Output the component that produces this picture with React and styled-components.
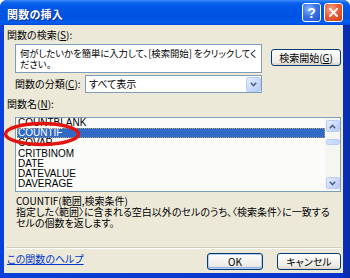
import React from 'react';
import styled, { createGlobalStyle } from 'styled-components';

const jp = `"Noto Sans CJK JP", "Noto Sans", sans-serif`;

const Global = createGlobalStyle`
  html, body { margin: 0; padding: 0; background: #ffffff; overflow: hidden; }
  body { font-family: ${jp}; }
`;

const Window = styled.div`
  position: relative;
  width: 350px;
  height: 278px;
  display: flex;
  flex-direction: column;
  border-radius: 7px 7px 0 0;
  overflow: hidden;
  background: linear-gradient(to right, #0A3FDB 0%, #0840D8 2%, #0833C8 97%, #0A2AA8 100%);
  font-family: ${jp};
  font-size: 10px;
  font-feature-settings: "palt";
  color: #000;
`;

const TitleBar = styled.div`
  height: 25px;
  flex: none;
  display: flex;
  align-items: flex-start;
  padding: 3px 7px 0 7px;
  box-sizing: border-box;
  background: linear-gradient(to bottom, #3C8CF8 0%, #0A62EC 12%, #0056E6 30%, #0053E2 70%, #005CEC 90%, #0047D6 100%);
`;

const Title = styled.div`
  flex: 1;
  margin-top: 5px;
  line-height: 12px;
  color: #ffffff;
  font-weight: bold;
  font-size: 11px;
  letter-spacing: 0.2px;
  text-shadow: 1px 1px 0 #0A2A8C;
`;

const CapButton = styled.div`
  width: 19px;
  height: 19px;
  box-sizing: border-box;
  border: 1px solid #ffffff;
  border-radius: 3px;
  margin-left: ${p => (p.$close ? '3px' : '0')};
  display: flex;
  align-items: center;
  justify-content: center;
  color: #fff;
  font-family: "Liberation Sans", sans-serif;
  font-weight: bold;
  font-size: 14px;
  line-height: 1;
  background: ${p =>
    p.$close
      ? 'radial-gradient(circle at 35% 30%, #F6A58A 0%, #E8603A 45%, #CC3A18 100%)'
      : 'radial-gradient(circle at 35% 30%, #8FB6FA 0%, #3A74EC 45%, #1B4FD2 100%)'};
`;

const Body = styled.div`
  flex: 1;
  min-height: 0;
  display: flex;
  flex-direction: column;
  background: #ECE9D8;
  margin: 0 7px 5px 4px;
  padding: 4px 2px 3px 3px;
`;

const Label = styled.div`
  line-height: 12px;
  height: 12px;
  white-space: nowrap;
  margin-top: ${p => p.$mt || 0}px;
  padding-left: ${p => p.$indent || 0}px;
  width: ${p => (p.$w ? `${p.$w}px` : 'auto')};
  flex: none;
  box-sizing: border-box;
`;

const SearchRow = styled.div`
  display: flex;
  align-items: flex-start;
  margin-top: 3px;
  padding-left: 8px;
  gap: 9px;
`;

const SearchBox = styled.div`
  width: 247px;
  height: 29px;
  box-sizing: border-box;
  border: 1px solid #7F9DB9;
  background: #ffffff;
  padding: 3px 0 0 4px;
  font-size: 9.4px;
  letter-spacing: -0.05px;
  line-height: 11px;
  overflow: hidden;
`;

const Line = styled.div`
  white-space: nowrap;
`;

const XPButton = styled.div`
  box-sizing: border-box;
  width: ${p => p.$w}px;
  height: 17px;
  margin-top: ${p => p.$mt || 0}px;
  border: 1px solid #003C74;
  border-radius: 3px;
  background: linear-gradient(to bottom, #FFFFFF 0%, #F6F6F2 35%, #ECEBE6 80%, #D8D2C6 100%);
  box-shadow: ${p =>
    p.$default ? 'inset 0 0 0 1px #B5CDF3, inset 0 -1px 0 1px #92B2EA' : 'none'};
  display: flex;
  align-items: center;
  justify-content: center;
  line-height: 15px;
  white-space: nowrap;
`;

const CategoryRow = styled.div`
  display: flex;
  align-items: center;
  margin-top: 2px;
  padding-left: 8px;
`;

const Select = styled.div`
  width: 177px;
  height: 18px;
  box-sizing: border-box;
  border: 1px solid #7F9DB9;
  background: #ffffff;
  display: flex;
  align-items: center;
  padding: 0 0 0 3px;
`;

const SelectText = styled.span`
  flex: 1;
  line-height: 16px;
`;

const ArrowBox = styled.div`
  width: ${p => p.$w || 14}px;
  height: ${p => p.$h || 14}px;
  box-sizing: border-box;
  border: 1px solid #B9CCF6;
  border-radius: 2px;
  background: linear-gradient(135deg, #E6EEFE 0%, #CCDBFC 50%, #B7CBF7 100%);
  display: flex;
  align-items: center;
  justify-content: center;
  flex: none;
`;

const ListBox = styled.div`
  position: relative;
  margin: 7px 0 0 8px;
  height: 75px;
  box-sizing: border-box;
  border: 1px solid #7F9DB9;
  background: #FBFCF9;
  display: flex;
  overflow: hidden;
`;

const Items = styled.div`
  flex: 1;
  overflow: hidden;
  padding-left: 1px;
`;

const Item = styled.div`
  height: 10.2px;
  line-height: 10.2px;
  padding-left: 1px;
  font-family: "Liberation Sans", Arial, sans-serif;
  font-size: 10px;
  white-space: nowrap;
  box-sizing: border-box;
  color: ${p => (p.$selected ? '#ffffff' : '#000000')};
  background: ${p => (p.$selected ? '#316AC5' : 'transparent')};
  outline: ${p => (p.$selected ? '1px dotted #A89C70' : 'none')};
  outline-offset: -1px;
`;

const ScrollBar = styled.div`
  width: 15px;
  flex: none;
  display: flex;
  flex-direction: column;
  align-items: center;
  background: #F6F6F1;
  padding: 2px 0;
  box-sizing: border-box;
`;

const Thumb = styled.div`
  margin-top: 7px;
  width: 14px;
  height: 6px;
  box-sizing: border-box;
  border: 1px solid #B9CCF6;
  border-radius: 2px;
  background: linear-gradient(to right, #D6E2FD, #C2D4FB);
`;

const Track = styled.div`
  flex: 1;
`;

const Signature = styled.div`
  margin-top: 3px;
  padding-left: 9px;
  line-height: 11px;
  white-space: nowrap;
`;

const Desc = styled.div`
  padding-left: 9px;
  line-height: 11px;
`;

const Spacer = styled.div`
  flex: 1;
`;

const Separator = styled.div`
  border-top: 1px solid #D0CDBC;
  border-bottom: 1px solid #FFFFFF;
`;

const Footer = styled.div`
  display: flex;
  align-items: flex-start;
  margin-top: 4px;
`;

const HelpLink = styled.a`
  flex: 1;
  color: #0033CC;
  text-decoration: underline;
  line-height: 12px;
  white-space: nowrap;
  cursor: pointer;
`;

const ButtonGroup = styled.div`
  display: flex;
  gap: 14px;
`;

const Circle = styled.svg`
  position: absolute;
  left: 3px;
  top: 121px;
  pointer-events: none;
`;

const Chevron = ({ up }) => (
  <svg width="7" height="5" viewBox="0 0 7 5">
    <path
      d={up ? 'M0.8 4.2 L3.5 1.5 L6.2 4.2' : 'M0.8 0.8 L3.5 3.5 L6.2 0.8'}
      fill="none"
      stroke="#4D6185"
      strokeWidth="1.6"
    />
  </svg>
);

const functions = ['COUNTBLANK', 'COUNTIF', 'COVAR', 'CRITBINOM', 'DATE', 'DATEVALUE', 'DAVERAGE'];

export default function App() {
  return (
    <>
      <Global />
      <Window>
        <TitleBar>
          <Title>関数の挿入</Title>
          <CapButton>?</CapButton>
          <CapButton $close>
            <svg width="9" height="9" viewBox="0 0 9 9">
              <path d="M1 1 L8 8 M8 1 L1 8" stroke="#fff" strokeWidth="1.8" strokeLinecap="square" />
            </svg>
          </CapButton>
        </TitleBar>
        <Body>
          <Label>関数の検索(<u>S</u>):</Label>
          <SearchRow>
            <SearchBox>
              <Line>何がしたいかを簡単に入力して、[検索開始] をクリックしてく</Line>
              <Line>ださい。</Line>
            </SearchBox>
            <XPButton $w={70} $mt={5}>検索開始(<u>G</u>)</XPButton>
          </SearchRow>
          <CategoryRow>
            <Label $w={70}>関数の分類(<u>C</u>):</Label>
            <Select>
              <SelectText>すべて表示</SelectText>
              <ArrowBox $w={15} $h={15}>
                <Chevron />
              </ArrowBox>
            </Select>
          </CategoryRow>
          <Label $mt={5}>関数名(<u>N</u>):</Label>
          <ListBox>
            <Items>
              {functions.map(f => (
                <Item key={f} $selected={f === 'COUNTIF'}>{f}</Item>
              ))}
            </Items>
            <ScrollBar>
              <ArrowBox $h={12}>
                <Chevron up />
              </ArrowBox>
              <Thumb />
              <Track />
              <ArrowBox $h={12}>
                <Chevron />
              </ArrowBox>
            </ScrollBar>
          </ListBox>
          <Signature>COUNTIF(範囲,検索条件)</Signature>
          <Desc>
            <Line>指定した〈範囲〉に含まれる空白以外のセルのうち、〈検索条件〉に一致する</Line>
            <Line>セルの個数を返します。</Line>
          </Desc>
          <Spacer />
          <Separator />
          <Footer>
            <HelpLink>この関数のヘルプ</HelpLink>
            <ButtonGroup>
              <XPButton $w={56} $default>OK</XPButton>
              <XPButton $w={64}>キャンセル</XPButton>
            </ButtonGroup>
          </Footer>
        </Body>
        <Circle width="80" height="26" viewBox="0 0 80 26">
          <ellipse cx="39" cy="13" rx="36.5" ry="10.5" fill="none" stroke="#E3140E" strokeWidth="3.5" />
        </Circle>
      </Window>
    </>
  );
}
